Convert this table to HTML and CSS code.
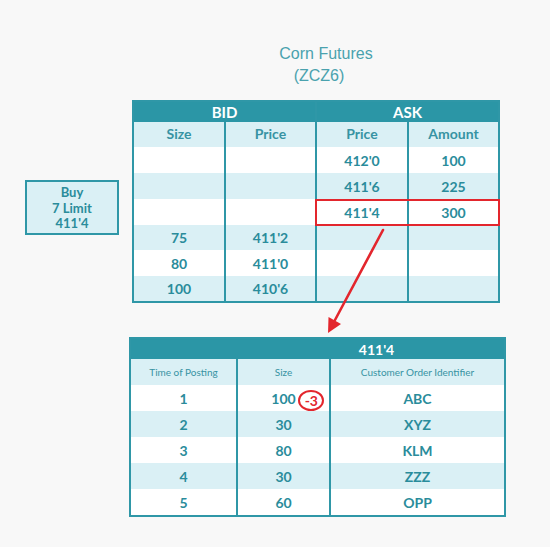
FILE: index.html
```html
<!DOCTYPE html>
<html>
<head>
<meta charset="utf-8">
<link rel="stylesheet" href="styles.css">
</head>
<body>
<div class="page">
  <div class="title">
    <div>Corn Futures</div>
    <div class="title-sub">(ZCZ6)</div>
  </div>
  <div class="book-row">
    <div class="buy">Buy<br>7 Limit<br>411'4</div>
    <div class="grid book">
      <div class="hd span2">BID</div>
      <div class="hd span2">ASK</div>
      <div class="sh">Size</div><div class="sh">Price</div><div class="sh">Price</div><div class="sh">Amount</div>
      <div class="c w"></div><div class="c w"></div><div class="c w">412'0</div><div class="c w">100</div>
      <div class="c l"></div><div class="c l"></div><div class="c l">411'6</div><div class="c l">225</div>
      <div class="c w"></div><div class="c w"></div><div class="c w">411'4</div><div class="c w">300</div>
      <div class="c l">75</div><div class="c l">411'2</div><div class="c l"></div><div class="c l"></div>
      <div class="c w">80</div><div class="c w">411'0</div><div class="c w"></div><div class="c w"></div>
      <div class="c l">100</div><div class="c l">410'6</div><div class="c l"></div><div class="c l"></div>
    </div>
  </div>
  <div class="grid queue">
    <div class="hd span3 qhd">411'4</div>
    <div class="sh small">Time of Posting</div><div class="sh small">Size</div><div class="sh small">Customer Order Identifier</div>
    <div class="c w">1</div><div class="c w"><span class="qty">100<span class="badge">-3</span></span></div><div class="c w">ABC</div>
    <div class="c l">2</div><div class="c l">30</div><div class="c l">XYZ</div>
    <div class="c w">3</div><div class="c w">80</div><div class="c w">KLM</div>
    <div class="c l">4</div><div class="c l">30</div><div class="c l">ZZZ</div>
    <div class="c w">5</div><div class="c w">60</div><div class="c w">OPP</div>
  </div>
</div>
<div class="highlight"></div>
<svg class="arrow" width="550" height="547" viewBox="0 0 550 547">
  <line x1="383" y1="230" x2="335" y2="320" stroke="#e3262d" stroke-width="2.6" stroke-linecap="round"/>
  <polygon points="328,333 341,324 328.5,317" fill="#e3262d"/>
</svg>
</body>
</html>
```
FILE: styles.css
```css
html, body {
  margin: 0;
  padding: 0;
}
body {
  background: #f8f8f8;
  width: 550px;
  height: 547px;
  position: relative;
  overflow: hidden;
  font-family: Lato, "Open Sans", sans-serif;
  color: #2a8c9b;
}
.page {
  padding-top: 43px;
}
.title {
  padding-left: 102px;
  text-align: center;
  font-family: "Liberation Sans", Arial, sans-serif;
  font-size: 16px;
  line-height: 22px;
  color: #4aa2ae;
}
.title-sub {
  padding-right: 14px;
}
.book-row {
  display: flex;
  align-items: flex-start;
  margin-top: 13px;
}
.buy {
  margin-left: 25px;
  margin-top: 80px;
  width: 90px;
  border: 2px solid #2f97a7;
  background: #daf0f5;
  text-align: center;
  font-weight: 700;
  font-size: 13px;
  line-height: 15.5px;
  padding-top: 3px;
  height: 48px;
}
.grid {
  display: grid;
  background: #2f97a7;
  padding: 2px;
  column-gap: 2px;
}
.book {
  margin-left: 13px;
  width: 364px;
  grid-template-columns: 90px 89px 90px 89px;
  grid-template-rows: 20px 25px 26px 26px 26px 25px 26px 25px;
}
.queue {
  margin-top: 34px;
  margin-left: 129px;
  width: 373px;
  grid-template-columns: 105px 91px 173px;
  grid-template-rows: 20px 26px repeat(5, 26px);
}
.hd {
  color: #fff;
  font-weight: 700;
  font-size: 15px;
  display: flex;
  align-items: center;
  justify-content: center;
  background: #2b96a6;
}
.span2 { grid-column: span 2; }
.span3 { grid-column: span 3; }
.qhd {
  padding-left: 118px;
  font-size: 14px;
}
.sh {
  background: #daf0f5;
  display: flex;
  align-items: center;
  justify-content: center;
  font-weight: 700;
  font-size: 14px;
  color: #3793a3;
  padding-bottom: 2px;
}
.sh.small {
  font-weight: 400;
  font-size: 10px;
  padding-bottom: 0;
}
.c {
  display: flex;
  align-items: center;
  justify-content: center;
  font-weight: 700;
  font-size: 14px;
}
.w { background: #ffffff; }
.l { background: #daf0f5; }
.qty {
  position: relative;
}
.badge {
  position: absolute;
  left: 27px;
  top: 0;
  width: 22px;
  height: 17px;
  border: 2px solid #e3262d;
  border-radius: 50%;
  color: #e3262d;
  font-size: 14px;
  line-height: 17px;
  text-align: center;
}
.highlight {
  position: absolute;
  left: 315px;
  top: 199px;
  width: 181px;
  height: 23px;
  border: 2px solid #e3262d;
}
.arrow {
  position: absolute;
  left: 0;
  top: 0;
  pointer-events: none;
}
```
